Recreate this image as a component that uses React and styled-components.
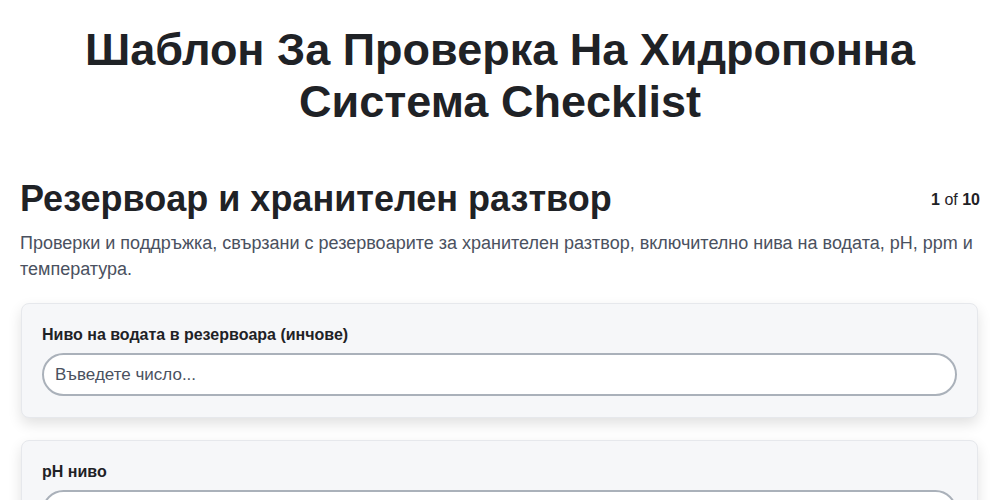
import * as React from "react";
import styled, { createGlobalStyle } from "styled-components";

const GlobalStyle = createGlobalStyle`
  body {
    margin: 0;
    background: #ffffff;
    font-family: "Liberation Sans", Arial, sans-serif;
    color: #1f2226;
  }
`;

const Page = styled.div`
  padding: 24px 20px 40px;
`;

const Title = styled.h1`
  margin: 0 0 49px;
  text-align: center;
  font-size: 45px;
  line-height: 52px;
  font-weight: 700;
  color: #1f2226;
  padding: 0 60px;
`;

const SectionHead = styled.div`
  display: flex;
  justify-content: space-between;
  align-items: flex-start;
`;

const SectionTitle = styled.h2`
  margin: 0;
  font-size: 36px;
  line-height: 44px;
  font-weight: 700;
  color: #1f2226;
`;

const Counter = styled.div`
  font-size: 16px;
  padding-top: 14px;
  color: #1f2226;
  b {
    font-weight: 700;
  }
`;

const Description = styled.p`
  margin: 9px 0 21px;
  font-size: 18px;
  line-height: 26px;
  color: #4a5160;
`;

const Card = styled.div`
  background: #f6f7f9;
  border: 1px solid #e6e8ec;
  border-radius: 8px;
  box-shadow: 0 6px 14px rgba(0, 0, 0, 0.12);
  padding: 22px 20px 21px;
  margin: 0 2px 22px 1px;
`;

const Label = styled.label`
  display: block;
  font-size: 16px;
  font-weight: 700;
  color: #1f2226;
  margin-bottom: 9px;
`;

const Input = styled.input`
  display: block;
  box-sizing: border-box;
  width: 100%;
  height: 43px;
  border: 2px solid #aab1ba;
  border-radius: 22px;
  background: #ffffff;
  padding: 0 11px;
  font-family: "Liberation Sans", Arial, sans-serif;
  font-size: 17px;
  color: #1f2226;
  outline: none;
  &::placeholder {
    color: #4a5160;
  }
`;

const fields = [
  { id: "water", label: "Ниво на водата в резервоара (инчове)" },
  { id: "ph", label: "pH ниво" },
];

export default function App() {
  return (
    <>
      <GlobalStyle />
      <Page>
        <Title>Шаблон За Проверка На Хидропонна Система Checklist</Title>
        <SectionHead>
          <SectionTitle>Резервоар и хранителен разтвор</SectionTitle>
          <Counter>
            <b>1</b> of <b>10</b>
          </Counter>
        </SectionHead>
        <Description>
          Проверки и поддръжка, свързани с резервоарите за хранителен разтвор,
          включително нива на водата, pH, ppm и температура.
        </Description>
        {fields.map((f) => (
          <Card key={f.id}>
            <Label htmlFor={f.id}>{f.label}</Label>
            <Input id={f.id} type="number" placeholder="Въведете число..." />
          </Card>
        ))}
      </Page>
    </>
  );
}
